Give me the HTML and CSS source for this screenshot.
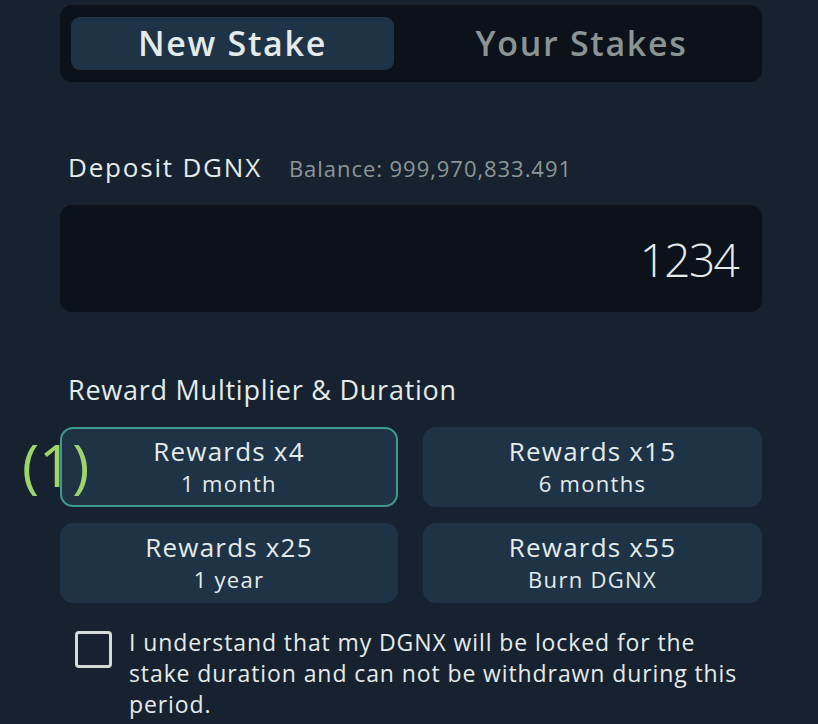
FILE: index.html
```html
<!DOCTYPE html>
<html>
<head>
<meta charset="utf-8">
<link rel="stylesheet" href="styles.css">
</head>
<body>
<div class="page">
  <div class="tabs">
    <div class="tab active">New Stake</div>
    <div class="tab">Your Stakes</div>
  </div>

  <div class="deposit-head">
    <span class="label">Deposit DGNX</span>
    <span class="balance">Balance: 999,970,833.491</span>
  </div>
  <div class="amount">1234</div>

  <div class="section-label">Reward Multiplier &amp; Duration</div>
  <div class="options">
    <div class="option selected">
      <span class="marker">(1)</span>
      <div class="opt-title">Rewards x4</div>
      <div class="opt-sub">1 month</div>
    </div>
    <div class="option">
      <div class="opt-title">Rewards x15</div>
      <div class="opt-sub">6 months</div>
    </div>
    <div class="option">
      <div class="opt-title">Rewards x25</div>
      <div class="opt-sub">1 year</div>
    </div>
    <div class="option">
      <div class="opt-title">Rewards x55</div>
      <div class="opt-sub">Burn DGNX</div>
    </div>
  </div>

  <div class="agree">
    <div class="checkbox"></div>
    <p class="agree-text">I understand that my DGNX will be locked for the stake duration and can not be withdrawn during this period.</p>
  </div>
</div>
</body>
</html>
```

FILE: styles.css
```css
* { box-sizing: border-box; }
html, body {
  margin: 0;
  padding: 0;
  background: #172230;
  height: 100%;
  overflow: hidden;
}
body {
  font-family: "Open Sans", "Noto Sans", sans-serif;
  color: #e4ebea;
}
.page {
  width: 702px;
  margin-left: 60px;
  padding-top: 5px;
}
.tabs {
  background: #0b121a;
  border-radius: 12px;
  height: 77px;
  padding: 12px 11px;
  display: grid;
  grid-template-columns: 323px 1fr;
  gap: 18px;
}
.tab {
  display: flex;
  align-items: center;
  justify-content: center;
  font-size: 34px;
  font-weight: 600;
  color: #8a9493;
  border-radius: 9px;
  letter-spacing: 1.7px;
  padding-bottom: 1px;
}
.tab.active {
  background: #1f3347;
  color: #e4ebea;
}
.deposit-head {
  margin-top: 67px;
  padding-left: 8px;
  display: flex;
  align-items: baseline;
  gap: 27px;
  height: 36px;
}
.label {
  font-size: 26px;
  letter-spacing: 1.8px;
}
.balance {
  font-size: 22px;
  color: #8d9796;
  letter-spacing: 0.95px;
}
.amount {
  margin-top: 20px;
  height: 107px;
  background: #0b121a;
  border-radius: 12px;
  display: flex;
  align-items: center;
  justify-content: flex-end;
  padding-right: 24px;
  font-size: 46px;
  font-weight: 300;
  letter-spacing: -1.7px;
}
.section-label {
  margin-top: 59px;
  padding-left: 8px;
  font-size: 27px;
  letter-spacing: 0.75px;
  height: 38px;
  line-height: 38px;
}
.options {
  margin-top: 18px;
  display: grid;
  grid-template-columns: 338px 339px;
  column-gap: 25px;
  row-gap: 16px;
}
.option {
  position: relative;
  height: 80px;
  background: #1f3347;
  border-radius: 13px;
  display: flex;
  flex-direction: column;
  align-items: center;
  justify-content: center;
  border: 2px solid transparent;
}
.option.selected {
  border-color: #3f9a8d;
}
.opt-title {
  font-size: 26px;
  line-height: 33px;
  letter-spacing: 1.2px;
}
.opt-sub {
  font-size: 22px;
  line-height: 31px;
  letter-spacing: 1.3px;
}
.marker {
  position: absolute;
  left: -40px;
  top: 3px;
  font-size: 58px;
  line-height: 66px;
  color: #9fd46a;
  font-weight: 400;
}
.agree {
  margin-top: 24px;
  display: flex;
  align-items: flex-start;
  gap: 17px;
  padding-left: 15px;
}
.checkbox {
  flex: none;
  width: 37px;
  height: 37px;
  border: 3px solid #d3dbda;
  border-radius: 4px;
  margin-top: 4px;
}
.agree-text {
  margin: 0;
  font-size: 23px;
  line-height: 31px;
  letter-spacing: 0.9px;
  width: 622px;
}
```
